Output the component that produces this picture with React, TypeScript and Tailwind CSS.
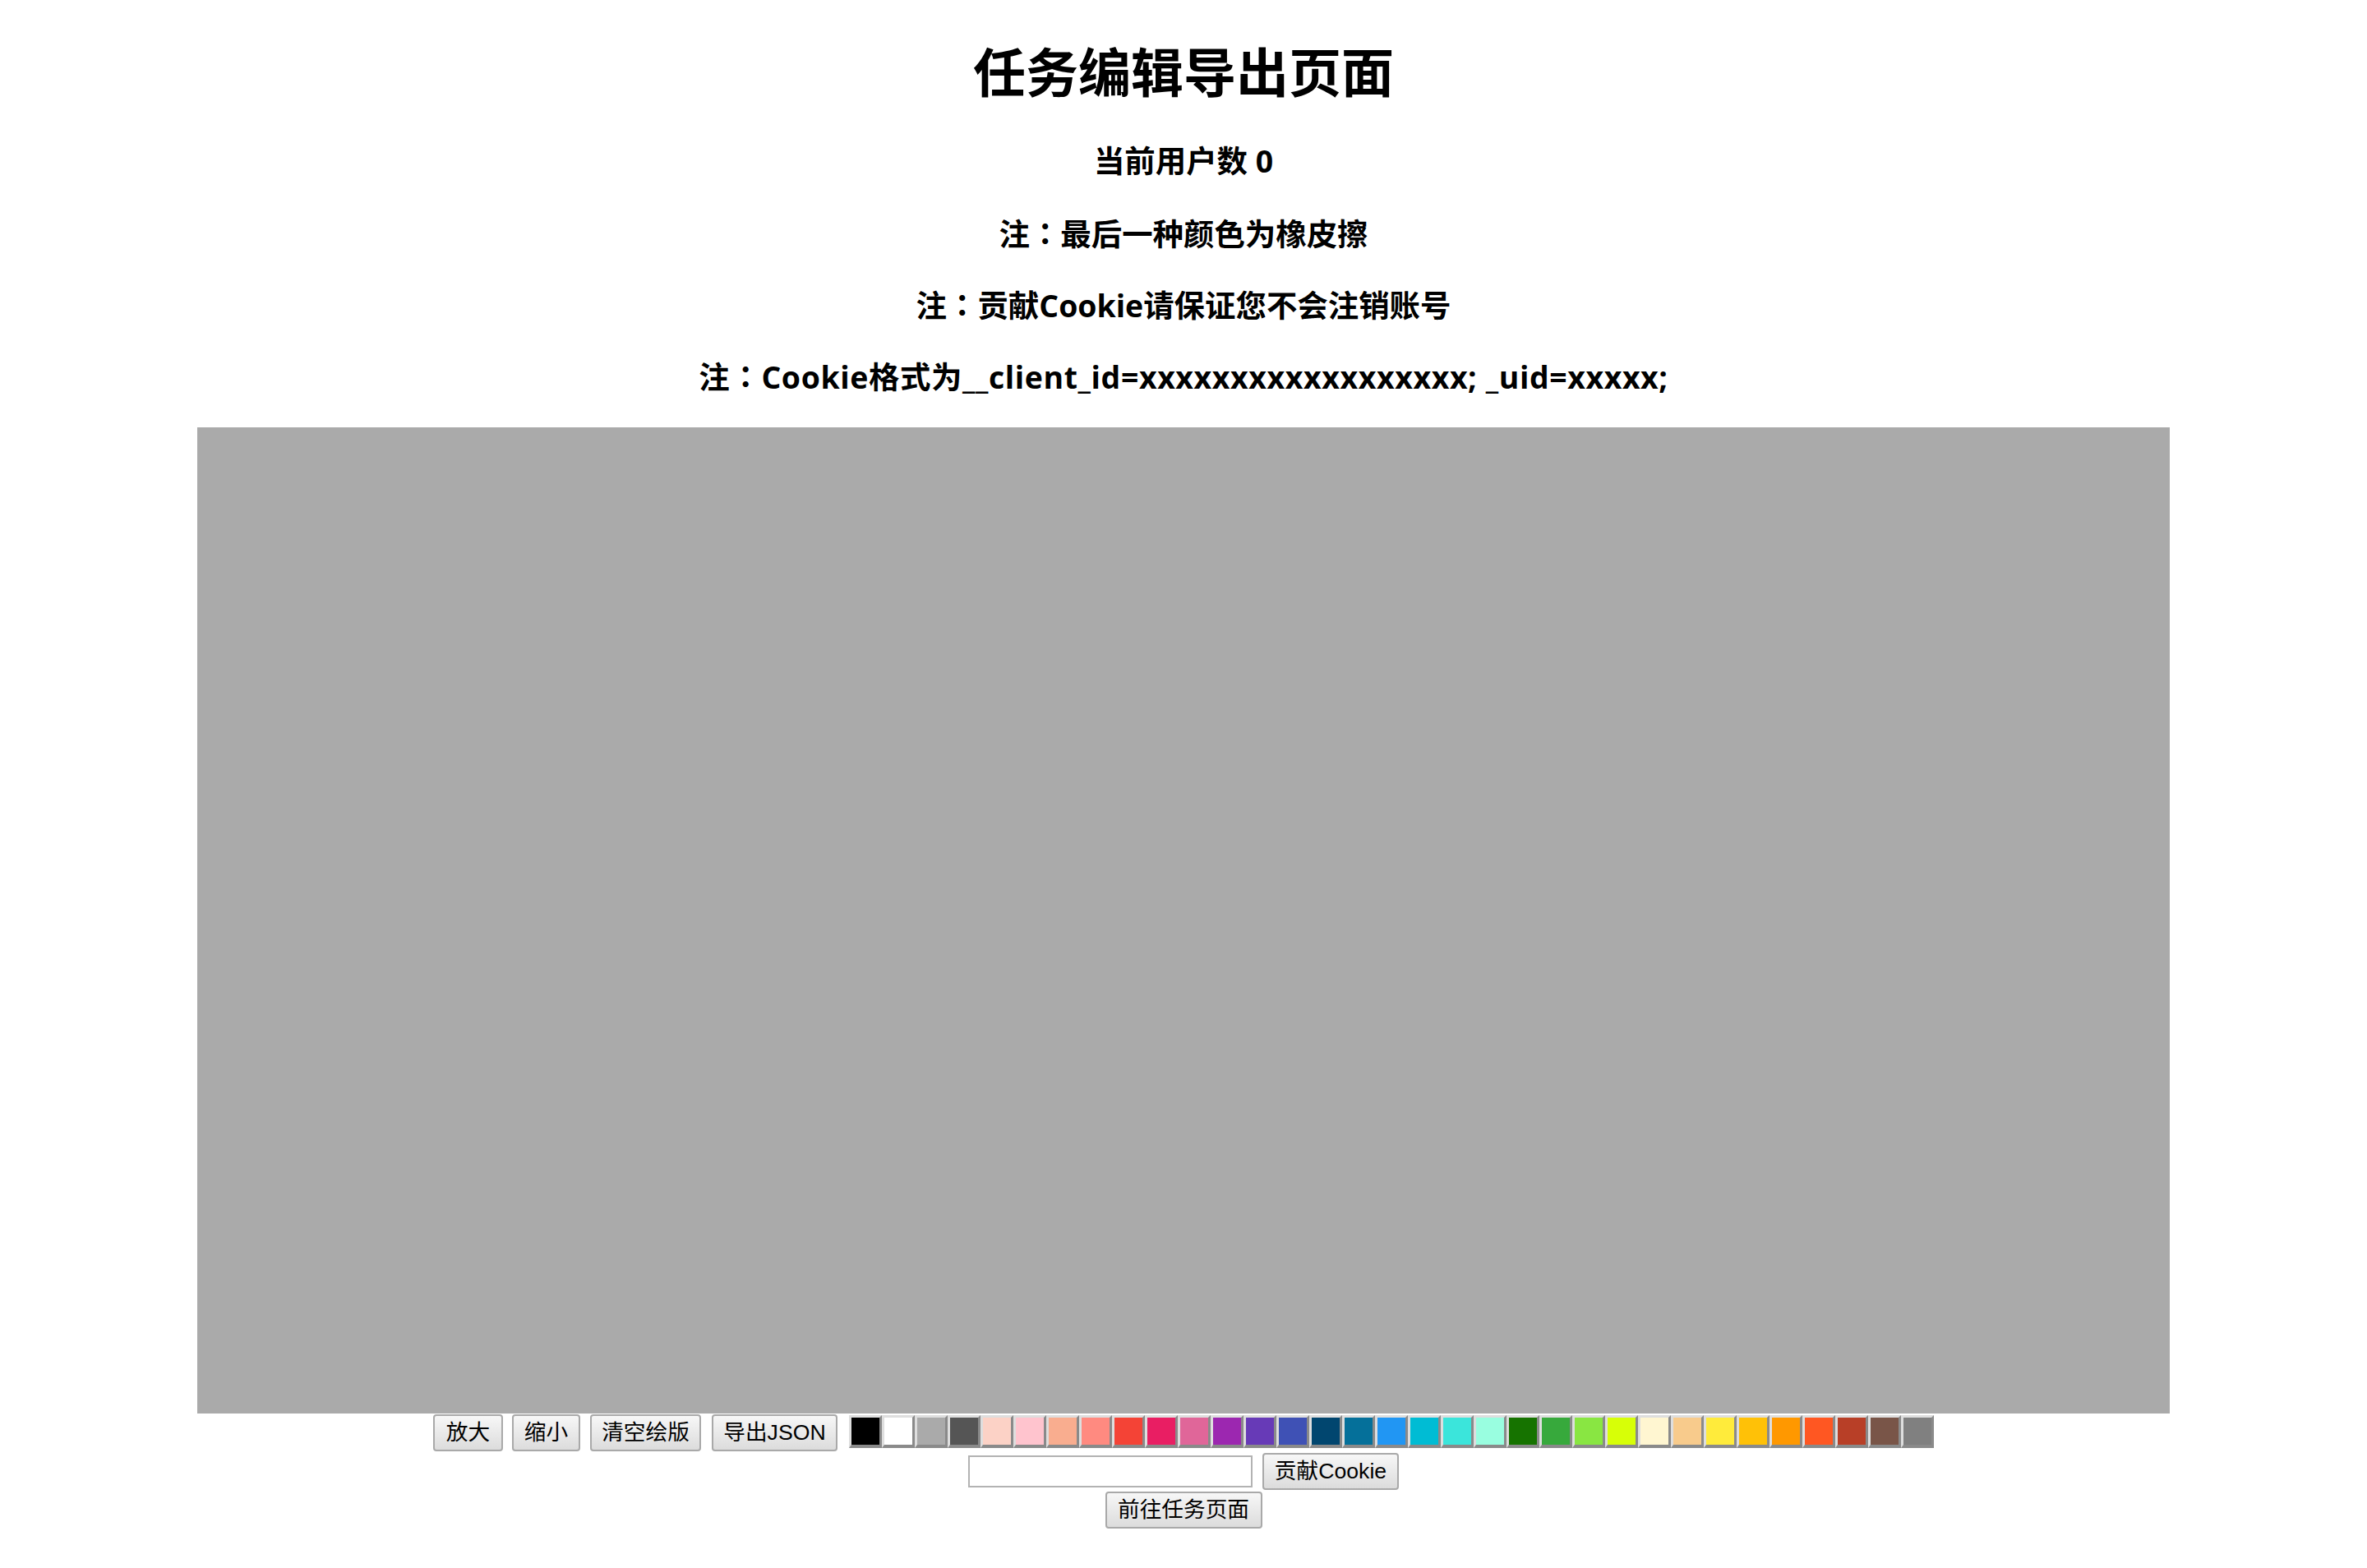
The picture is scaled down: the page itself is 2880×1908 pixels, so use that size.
import React from "react";

const COLORS = [
  "#000000", "#ffffff", "#aaaaaa", "#555555", "#fcd2c6", "#ffc4ce", "#f9ad8f", "#ff8a80",
  "#f44336", "#e91e63", "#e06699", "#9c27b0", "#673ab7", "#3f51b5", "#01466f", "#05709a",
  "#2196f3", "#00bcd4", "#3be5db", "#99fee0", "#167300", "#37a93c", "#89e642", "#d7ff07",
  "#fff6d1", "#f8cb8c", "#ffeb3b", "#ffc107", "#ff9800", "#ff5722", "#b83f27", "#795548",
  "#808080",
];

const headFont = { fontFamily: '"Open Sans", "Noto Sans CJK SC", sans-serif' };

function Colon() {
  return <span className="font-['Noto_Sans_CJK_TC',sans-serif]">：</span>;
}

function Btn({ w, children }: { w: string; children: React.ReactNode }) {
  return (
    <button
      className={`${w} h-[45px] shrink-0 flex items-center justify-center border-2 border-[#a9a9a9] rounded-[4px] bg-gradient-to-b from-[#f7f7f7] to-[#dcdcdc] text-[26.67px] leading-none text-black font-['Liberation_Sans','Noto_Sans_CJK_SC',sans-serif]`}
    >
      {children}
    </button>
  );
}

export default function App() {
  return (
    <div className="w-[2880px] min-h-[1908px] bg-white flex flex-col items-center text-black">
      <div className="mt-[41px] h-[86px] leading-[86px] text-[64px] font-bold font-['Noto_Sans_CJK_SC',sans-serif]">
        任务编辑导出页面
      </div>
      <div className="mt-[44px] h-[50px] leading-[50px] text-[37.44px] font-bold" style={headFont}>
        当前用户数 0
      </div>
      <div className="mt-[37px] h-[50px] leading-[50px] text-[37.44px] font-bold" style={headFont}>
        注<Colon />最后一种颜色为橡皮擦
      </div>
      <div className="mt-[37px] h-[50px] leading-[50px] text-[37.44px] font-bold" style={headFont}>
        注<Colon />贡献Cookie请保证您不会注销账号
      </div>
      <div className="mt-[37px] h-[50px] leading-[50px] text-[37.44px] font-bold tracking-[0.6px]" style={headFont}>
        注<Colon />Cookie格式为__client_id=xxxxxxxxxxxxxxxxxx; _uid=xxxxx;
      </div>
      <div className="mt-[38px] w-[2400px] h-[1200px] bg-[#aaaaaa]" />
      <div className="mt-[1px] flex items-start">
        <Btn w="w-[85px]">放大</Btn>
        <div className="w-[11px]" />
        <Btn w="w-[83px]">缩小</Btn>
        <div className="w-[12px]" />
        <Btn w="w-[135px]">清空绘版</Btn>
        <div className="w-[13px]" />
        <Btn w="w-[153px]">导出JSON</Btn>
        <div className="w-[14px]" />
        <div className="flex mt-[1px]">
          {COLORS.map((c, i) => (
            <div
              key={i}
              className="w-[40px] h-[40px] border-[3px] border-t-[#dedede] border-l-[#dedede] border-r-[#8a8a8a] border-b-[#8a8a8a] border-b-[4px]"
              style={{ backgroundColor: c }}
            />
          ))}
        </div>
      </div>
      <div className="mt-[2px] flex items-center gap-[12px]">
        <div className="w-[346px] h-[39px] border-2 border-[#b3b3b3] bg-white" />
        <Btn w="w-[166px]">贡献Cookie</Btn>
      </div>
      <div className="mt-[2px] flex">
        <Btn w="w-[191px]">前往任务页面</Btn>
      </div>
    </div>
  );
}
